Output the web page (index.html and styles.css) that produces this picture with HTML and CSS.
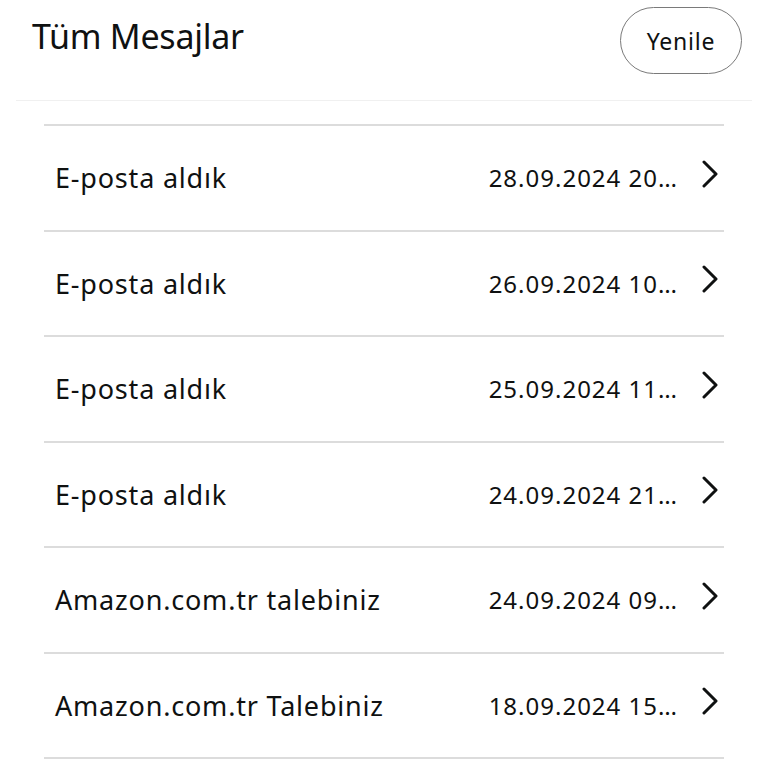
FILE: index.html
```html
<!DOCTYPE html>
<html lang="tr">
<head>
<meta charset="utf-8">
<link rel="stylesheet" href="styles.css">
</head>
<body>
<div class="page">
  <header class="header">
    <h1 class="title">Tüm Mesajlar</h1>
    <button class="refresh">Yenile</button>
  </header>
  <ul class="list">
    <li class="row"><span class="subject">E-posta aldık</span><span class="date">28.09.2024 20…</span><svg class="chev" viewBox="0 0 16 28"><path d="M2 2 L14 14 L2 26"/></svg></li>
    <li class="row"><span class="subject">E-posta aldık</span><span class="date">26.09.2024 10…</span><svg class="chev" viewBox="0 0 16 28"><path d="M2 2 L14 14 L2 26"/></svg></li>
    <li class="row"><span class="subject">E-posta aldık</span><span class="date">25.09.2024 11…</span><svg class="chev" viewBox="0 0 16 28"><path d="M2 2 L14 14 L2 26"/></svg></li>
    <li class="row"><span class="subject">E-posta aldık</span><span class="date">24.09.2024 21…</span><svg class="chev" viewBox="0 0 16 28"><path d="M2 2 L14 14 L2 26"/></svg></li>
    <li class="row"><span class="subject">Amazon.com.tr talebiniz</span><span class="date">24.09.2024 09…</span><svg class="chev" viewBox="0 0 16 28"><path d="M2 2 L14 14 L2 26"/></svg></li>
    <li class="row"><span class="subject">Amazon.com.tr Talebiniz</span><span class="date">18.09.2024 15…</span><svg class="chev" viewBox="0 0 16 28"><path d="M2 2 L14 14 L2 26"/></svg></li>
  </ul>
</div>
</body>
</html>
```
FILE: styles.css
```css
* { box-sizing: border-box; }
html, body { margin: 0; padding: 0; background: #fff; }
body {
  font-family: "Noto Sans", "Open Sans", sans-serif;
  color: #0f1111;
  width: 768px;
  height: 768px;
  overflow: hidden;
}
.header {
  margin: 0 16px;
  height: 101px;
  display: flex;
  align-items: flex-start;
  justify-content: space-between;
  border-bottom: 1px solid #f0f0f0;
}
.title {
  margin: 12px 0 0 16px;
  font-size: 34px;
  font-weight: 400;
  line-height: 48px;
  letter-spacing: -0.25px;
}
.refresh {
  margin: 7px 10px 0 0;
  width: 122px;
  height: 67px;
  border: 1.5px solid #7a7a7a;
  border-radius: 34px;
  background: #fff;
  font-family: inherit;
  font-size: 23px;
  letter-spacing: 0.8px;
  color: #0f1111;
  padding: 0;
}
.list {
  list-style: none;
  margin: 23px 44px 0 44px;
  padding: 0;
  border-top: 2px solid #dcdcdc;
}
.row {
  height: 105.5px;
  display: flex;
  align-items: center;
  padding: 0 6px 0 11px;
  border-bottom: 2px solid #dcdcdc;
}
.subject {
  flex: 1;
  font-size: 27px;
  letter-spacing: 0.8px;
  white-space: nowrap;
}
.date {
  font-size: 24px;
  letter-spacing: 1px;
  white-space: nowrap;
  margin-right: 24px;
}
.chev {
  width: 16px;
  height: 28px;
  margin-top: -8px;
  fill: none;
  stroke: #0f1111;
  stroke-width: 3;
  stroke-linecap: round;
  stroke-linejoin: round;
}
```
